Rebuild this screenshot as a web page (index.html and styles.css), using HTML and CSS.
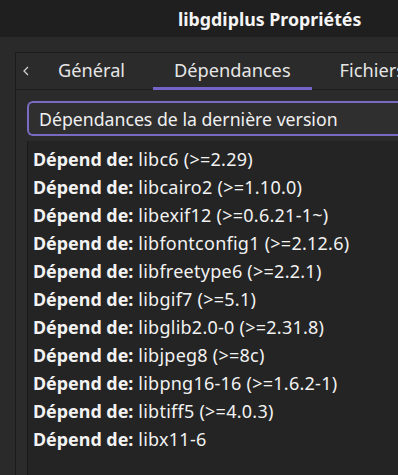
FILE: index.html
```html
<!DOCTYPE html>
<html lang="fr">
<head>
    <meta charset="UTF-8">
    <title>libgdiplus Propriétés</title>
    <link rel="stylesheet" href="styles.css">
</head>
<body>
    <div class="titlebar">
        <span class="title">libgdiplus Propriétés</span>
    </div>
    <div class="content">
        <div class="notebook">
            <div class="tabs">
                <span class="tab-arrow">
                    <svg width="8" height="12" viewBox="0 0 8 12"><path d="M6 2 L2 6 L6 10" fill="none" stroke="#cfcfcf" stroke-width="1.3"/></svg>
                </span>
                <span class="tab">Général</span>
                <span class="tab active">Dépendances</span>
                <span class="tab">Fichiers</span>
            </div>
            <div class="page">
                <div class="combo">Dépendances de la dernière version</div>
                <ul class="deps">
                    <li><b>Dépend de:</b> libc6 (&gt;=2.29)</li>
                    <li><b>Dépend de:</b> libcairo2 (&gt;=1.10.0)</li>
                    <li><b>Dépend de:</b> libexif12 (&gt;=0.6.21-1~)</li>
                    <li><b>Dépend de:</b> libfontconfig1 (&gt;=2.12.6)</li>
                    <li><b>Dépend de:</b> libfreetype6 (&gt;=2.2.1)</li>
                    <li><b>Dépend de:</b> libgif7 (&gt;=5.1)</li>
                    <li><b>Dépend de:</b> libglib2.0-0 (&gt;=2.31.8)</li>
                    <li><b>Dépend de:</b> libjpeg8 (&gt;=8c)</li>
                    <li><b>Dépend de:</b> libpng16-16 (&gt;=1.6.2-1)</li>
                    <li><b>Dépend de:</b> libtiff5 (&gt;=4.0.3)</li>
                    <li><b>Dépend de:</b> libx11-6</li>
                </ul>
            </div>
        </div>
    </div>
</body>
</html>
```

FILE: styles.css
```css
html, body {
    margin: 0;
    padding: 0;
    height: 100%;
    overflow: hidden;
}
body {
    font-family: 'Noto Sans', 'Open Sans', sans-serif;
    background: #2a2a2a;
    color: #f2f2f2;
    width: 398px;
    height: 475px;
}
.titlebar {
    height: 37px;
    background: #1f1f1f;
    display: flex;
    align-items: center;
    padding-left: 178px;
    box-sizing: border-box;
}
.title {
    font-weight: 700;
    font-size: 17.8px;
    color: #f4f4f4;
    white-space: nowrap;
}
.content {
    padding: 15px 0 0 15px;
    height: calc(100% - 37px);
    box-sizing: border-box;
}
.notebook {
    border-left: 1px solid #1b1b1b;
    border-top: 1px solid #1b1b1b;
    height: 100%;
    background: #2b2b2b;
    display: flex;
    flex-direction: column;
}
.tabs {
    height: 36px;
    border-bottom: 1px solid #1c1c1c;
    display: flex;
    align-items: stretch;
    gap: 7px;
    white-space: nowrap;
    font-size: 18.2px;
    color: #e6e6e6;
}
.tab-arrow {
    width: 16px;
    padding-left: 6px;
    display: flex;
    align-items: center;
}
.tab {
    display: flex;
    align-items: center;
    padding: 0 21px;
    box-sizing: border-box;
    border-bottom: 3px solid transparent;
    margin-bottom: -1px;
}
.tab.active {
    border-bottom-color: #7464c8;
}
.page {
    padding: 11px 0 0 11px;
    flex: 1;
    display: flex;
    flex-direction: column;
}
.combo {
    height: 35px;
    border: 2px solid #7a6bc2;
    border-right: none;
    border-radius: 6px 0 0 6px;
    background: #2f2f2f;
    box-sizing: border-box;
    display: flex;
    align-items: center;
    padding-left: 10px;
    font-size: 17.7px;
    white-space: nowrap;
    color: #f0f0f0;
}
.deps {
    list-style: none;
    margin: 5px 0 0 0;
    padding: 4px 0 0 5px;
    flex: 1;
    background: #242424;
    border-left: 1px solid #1a1a1a;
    font-size: 18px;
    letter-spacing: 0.25px;
}
.deps li {
    height: 28px;
    line-height: 28px;
    white-space: nowrap;
}
.deps b {
    font-weight: 700;
    font-size: 17.9px;
    letter-spacing: 0;
}
```
